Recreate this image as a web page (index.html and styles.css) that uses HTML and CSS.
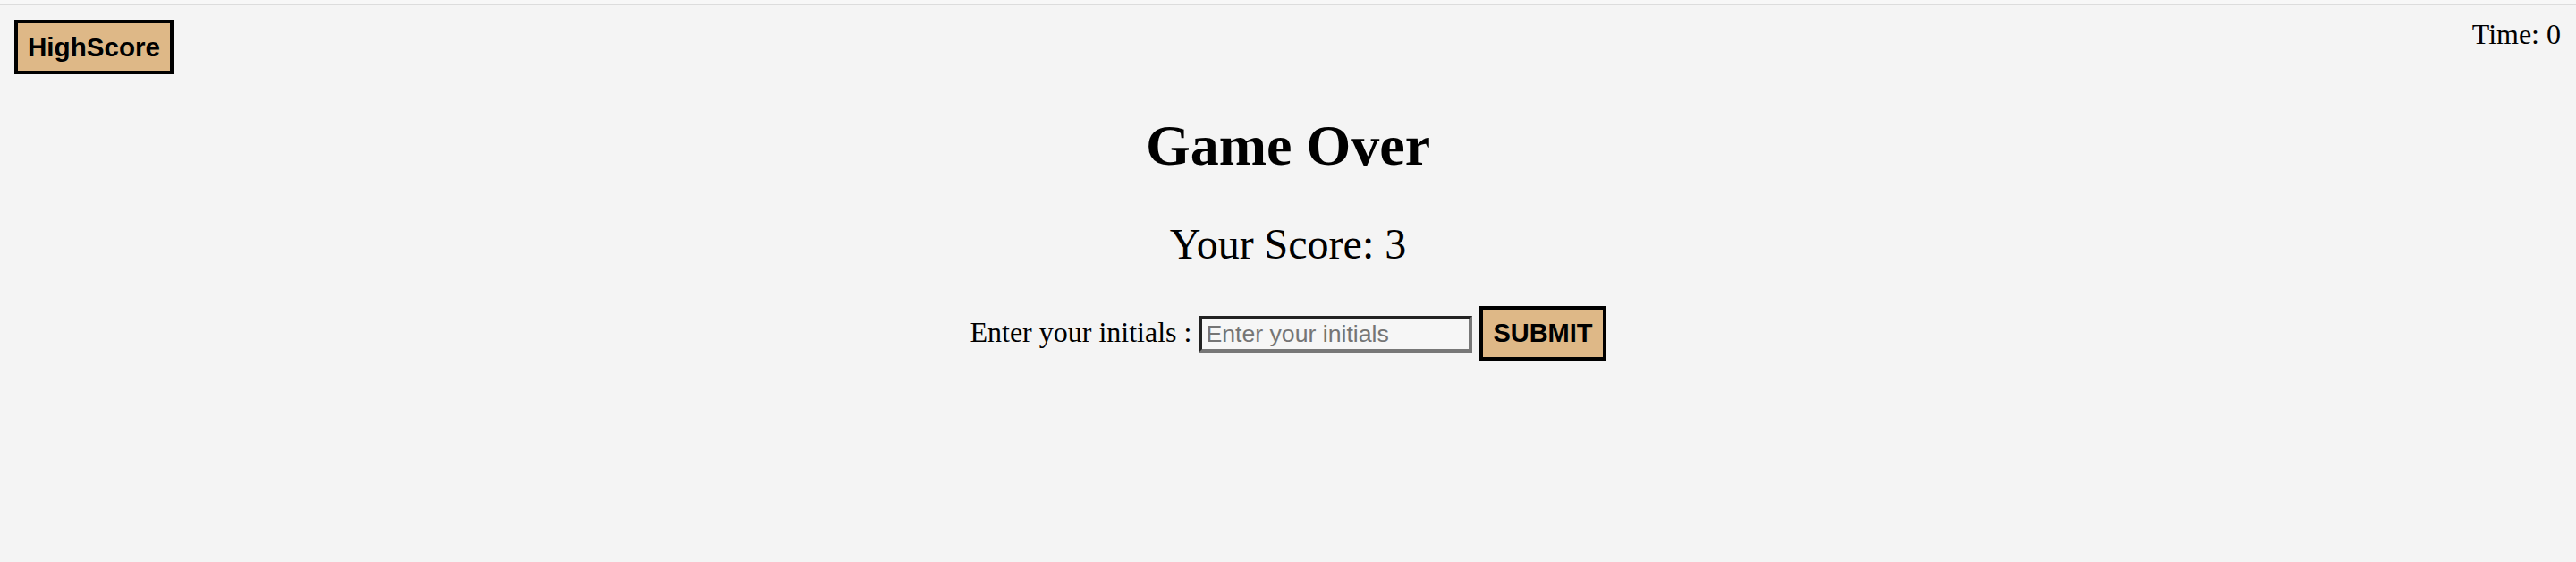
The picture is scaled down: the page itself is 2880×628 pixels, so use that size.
FILE: index.html
```html
<!DOCTYPE html>
<html lang="en">
<head>
<meta charset="utf-8">
<title>Quiz - Game Over</title>
<link rel="stylesheet" href="styles.css">
</head>
<body>
<div class="topline"></div>
<header class="header">
  <button class="btn hs-btn" type="button">HighScore</button>
  <div class="time">Time: 0</div>
</header>
<main class="main">
  <h1 class="title">Game Over</h1>
  <h2 class="score">Your Score: 3</h2>
  <form class="form-row">
    <label class="label" for="initials">Enter your initials : </label><input class="initials" id="initials" type="text" placeholder="Enter your initials"> <button class="btn submit-btn" type="button">SUBMIT</button>
  </form>
</main>
</body>
</html>
```
FILE: styles.css
```css
html, body {
  margin: 0;
  padding: 0;
  background: #f4f4f4;
}
body {
  font-family: "Liberation Serif", "Times New Roman", serif;
  font-size: 32px;
  color: #000;
  min-height: 628px;
}
.topline {
  height: 4px;
  border-bottom: 2px solid #dcdcdc;
  background: #f7f7f7;
}
.header {
  display: flex;
  justify-content: space-between;
  align-items: flex-start;
  padding: 0 17px 0 16px;
}
.btn {
  font-family: "Liberation Sans", Arial, sans-serif;
  font-weight: bold;
  font-size: 29px;
  line-height: 33px;
  color: #000;
  background: burlywood;
  border: 4px solid #000;
  border-radius: 0;
  padding: 10px 11px;
  margin: 0;
  cursor: pointer;
}
.hs-btn {
  margin-top: 16px;
  font-size: 29.6px;
  padding: 10px 11px 10px 11px;
}
.time {
  margin-top: 14px;
  line-height: 37px;
}
.main {
  text-align: center;
}
.title {
  font-size: 64px;
  font-weight: bold;
  margin: 43px 0 0;
}
.score {
  font-size: 48px;
  font-weight: normal;
  margin: 45px 0 0;
}
.form-row {
  margin: 42px 0 0;
}
.label {
  font-size: 32px;
}
.initials {
  box-sizing: border-box;
  width: 306px;
  height: 41px;
  font-family: "Liberation Sans", Arial, sans-serif;
  font-size: 26.67px;
  padding: 2px 4px;
  border-style: solid;
  border-width: 4px;
  border-color: #222 #777 #777 #222;
  background: #f6f6f6;
  margin: 0;
}
.initials::placeholder {
  color: #757575;
}
.submit-btn {
  vertical-align: baseline;
}
```
